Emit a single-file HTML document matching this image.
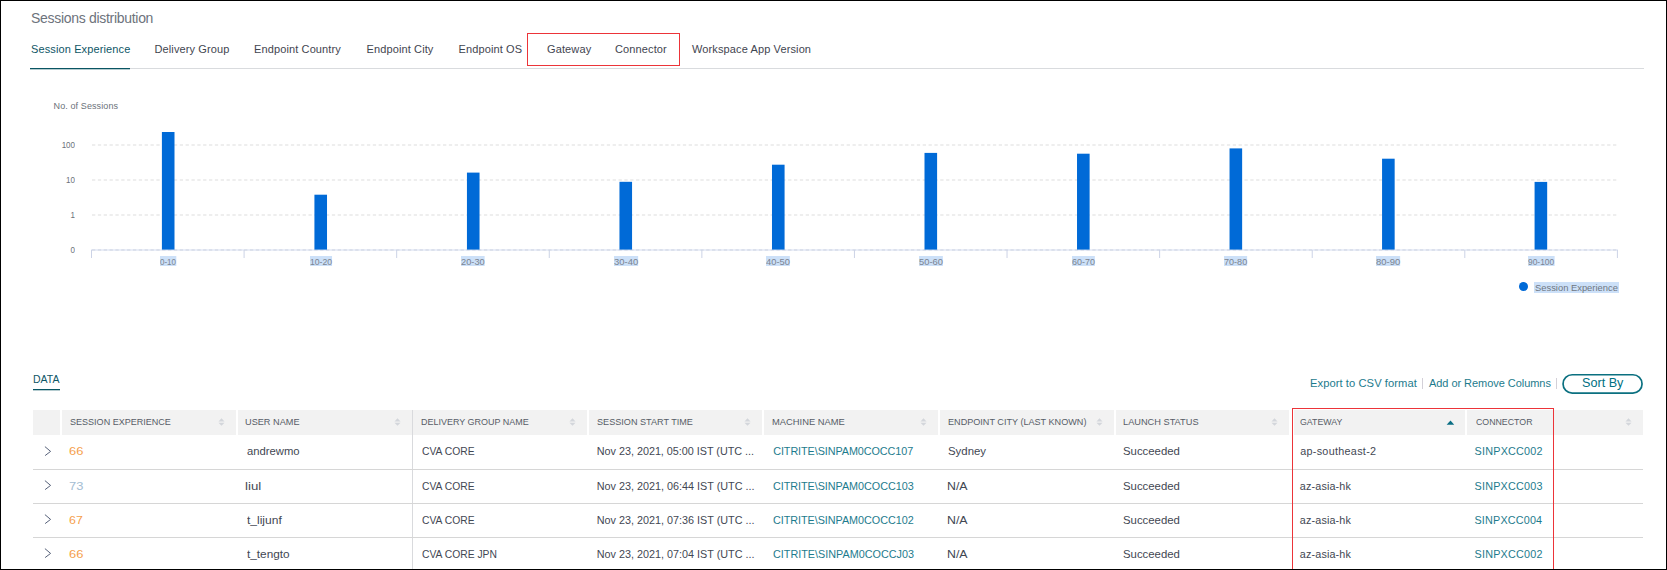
<!DOCTYPE html>
<html><head><meta charset="utf-8">
<style>
*{margin:0;padding:0;box-sizing:border-box}
html,body{width:1667px;height:570px;overflow:hidden;background:#fff}
body{position:relative;font-family:"Liberation Sans",sans-serif;color:#3b3f47}
.a{position:absolute;white-space:nowrap;line-height:1}
#frame{position:absolute;left:0;top:0;width:1667px;height:570px;border-top:1px solid #000;border-left:1px solid #000;border-right:1px solid #000;border-bottom:1px solid #000;z-index:50;pointer-events:none}
.title{left:31px;top:11px;font-size:14px;color:#6d737c;letter-spacing:-0.3px}
.tab{top:44px;font-size:11px;color:#3f4550;letter-spacing:0.12px}
.tab.act{color:#0e5666}
.tabline{left:31px;top:68px;width:1613px;height:1px;background:#d9dbde}
.tabul{left:30px;top:68px;width:100px;height:1px;background:#0a5563;box-shadow:0 1px 0 rgba(10,85,99,0.3)}
.redbox{border:1px solid #ec3439}
.ylab{font-size:9.3px;color:#6b717a;text-align:right;width:20px;transform:scaleX(0.86);transform-origin:right}
.grid{left:92px;width:1526px;height:0;border-top:1px dashed #dcdcdc}
.bar{width:13px;background:#0068d7}
.tick{width:1px;height:8px;top:250px;background:#ccd3e6}
.xl{transform:translateX(-50%) scaleX(0.8)}
.xlab{font-size:9.8px;color:#7b8491;background:#cce0f8;top:256px;height:10px;line-height:11px}
.hdr{top:410px;height:25px;background:#f2f2f2}
.htx{top:418px;font-size:9.6px;color:#646a73;letter-spacing:-0.4px}
.sort{width:7px;height:9px}
.rowsep{left:33px;width:1610px;height:1px;background:#d6d6d6}
.cell{font-size:10.7px;color:#3b3f47}
.lnk{color:#1d7b8d}
.chev{width:7px;height:10px}
</style></head><body>
<div id="frame"></div>
<div class="a title">Sessions distribution</div>

<div class="a tabline"></div>
<div class="a tabul"></div>
<div class="a tab act" style="left:31px">Session Experience</div>
<div class="a tab" style="left:154.5px">Delivery Group</div>
<div class="a tab" style="left:254px">Endpoint Country</div>
<div class="a tab" style="left:366.5px">Endpoint City</div>
<div class="a tab" style="left:458.5px">Endpoint OS</div>
<div class="a tab" style="left:547px">Gateway</div>
<div class="a tab" style="left:615px">Connector</div>
<div class="a tab" style="left:692px">Workspace App Version</div>
<div class="a redbox" style="left:527px;top:33px;width:153px;height:33px"></div>

<!-- chart -->
<div class="a" style="left:53.6px;top:102px;font-size:9px;color:#6b717a;letter-spacing:0.1px">No. of Sessions</div>
<div class="a ylab" style="left:55px;top:140.5px">100</div>
<div class="a ylab" style="left:55px;top:175.5px">10</div>
<div class="a ylab" style="left:55px;top:210.5px">1</div>
<div class="a ylab" style="left:55px;top:245.5px">0</div>
<svg class="a" style="left:0;top:0" width="1667" height="300"><line x1="92" y1="145" x2="1618" y2="145" stroke="#dddddd" stroke-width="1" stroke-dasharray="3.3 2.55"/><line x1="92" y1="180" x2="1618" y2="180" stroke="#dddddd" stroke-width="1" stroke-dasharray="3.3 2.55"/><line x1="92" y1="215" x2="1618" y2="215" stroke="#dddddd" stroke-width="1" stroke-dasharray="3.3 2.55"/><line x1="91" y1="250" x2="1618" y2="250" stroke="#d5ddf1" stroke-width="1"/><line x1="92" y1="250" x2="1618" y2="250" stroke="#cdd3e0" stroke-width="1" stroke-dasharray="3.3 2.55"/><line x1="91.50" y1="250" x2="91.50" y2="258" stroke="#ccd3e6" stroke-width="1"/><line x1="244.09" y1="250" x2="244.09" y2="258" stroke="#ccd3e6" stroke-width="1"/><line x1="396.68" y1="250" x2="396.68" y2="258" stroke="#ccd3e6" stroke-width="1"/><line x1="549.27" y1="250" x2="549.27" y2="258" stroke="#ccd3e6" stroke-width="1"/><line x1="701.86" y1="250" x2="701.86" y2="258" stroke="#ccd3e6" stroke-width="1"/><line x1="854.45" y1="250" x2="854.45" y2="258" stroke="#ccd3e6" stroke-width="1"/><line x1="1007.04" y1="250" x2="1007.04" y2="258" stroke="#ccd3e6" stroke-width="1"/><line x1="1159.63" y1="250" x2="1159.63" y2="258" stroke="#ccd3e6" stroke-width="1"/><line x1="1312.22" y1="250" x2="1312.22" y2="258" stroke="#ccd3e6" stroke-width="1"/><line x1="1464.81" y1="250" x2="1464.81" y2="258" stroke="#ccd3e6" stroke-width="1"/><line x1="1617.40" y1="250" x2="1617.40" y2="258" stroke="#ccd3e6" stroke-width="1"/><rect x="161.90" y="132" width="12.6" height="117.60" fill="#006ad7"/><rect x="314.42" y="194.7" width="12.6" height="54.90" fill="#006ad7"/><rect x="466.94" y="172.6" width="12.6" height="77.00" fill="#006ad7"/><rect x="619.46" y="181.8" width="12.6" height="67.80" fill="#006ad7"/><rect x="771.98" y="164.7" width="12.6" height="84.90" fill="#006ad7"/><rect x="924.50" y="152.9" width="12.6" height="96.70" fill="#006ad7"/><rect x="1077.02" y="153.7" width="12.6" height="95.90" fill="#006ad7"/><rect x="1229.54" y="148.4" width="12.6" height="101.20" fill="#006ad7"/><rect x="1382.06" y="158.7" width="12.6" height="90.90" fill="#006ad7"/><rect x="1534.58" y="181.9" width="12.6" height="67.70" fill="#006ad7"/></svg>
<div class="a xlab" style="left:160.20px;transform:scaleX(0.816);transform-origin:0 0">0-10</div>
<div class="a xlab" style="left:309.67px;transform:scaleX(0.882);transform-origin:0 0">10-20</div>
<div class="a xlab" style="left:461.39px;transform:scaleX(0.946);transform-origin:0 0">20-30</div>
<div class="a xlab" style="left:613.66px;transform:scaleX(0.966);transform-origin:0 0">30-40</div>
<div class="a xlab" style="left:766.33px;transform:scaleX(0.954);transform-origin:0 0">40-50</div>
<div class="a xlab" style="left:918.85px;transform:scaleX(0.954);transform-origin:0 0">50-60</div>
<div class="a xlab" style="left:1071.87px;transform:scaleX(0.914);transform-origin:0 0">60-70</div>
<div class="a xlab" style="left:1224.24px;transform:scaleX(0.926);transform-origin:0 0">70-80</div>
<div class="a xlab" style="left:1376.26px;transform:scaleX(0.966);transform-origin:0 0">80-90</div>
<div class="a xlab" style="left:1527.78px;transform:scaleX(0.859);transform-origin:0 0">90-100</div>
<div class="a" style="left:1519.3px;top:282px;width:9.2px;height:9.4px;border-radius:50%;background:#006ad7"></div>
<div class="a" style="left:1534px;top:282px;height:10.6px;line-height:12px;font-size:9.4px;color:#6f7782;background:#cce0f8;padding:0 1px">Session Experience</div>

<!-- data -->
<div class="a" style="left:33px;top:374px;font-size:10.5px;color:#0e5666">DATA</div>
<div class="a" style="left:33px;top:389px;width:27px;height:1px;background:#0a5563;box-shadow:0 1px 0 rgba(10,85,99,0.3)"></div>
<div class="a" style="left:1310px;top:378px;font-size:11.2px;color:#1d7b8d;letter-spacing:0.06px">Export to CSV format</div>
<div class="a" style="left:1422px;top:378px;width:1px;height:11px;background:#d3d0d8"></div>
<div class="a" style="left:1429px;top:378px;font-size:11px;color:#1d7b8d;letter-spacing:-0.05px">Add or Remove Columns</div>
<div class="a" style="left:1556px;top:378px;width:1px;height:11px;background:#d3d0d8"></div>
<svg class="a" style="left:1560px;top:372px" width="86" height="24"><rect x="3.05" y="2.75" width="79" height="18.3" rx="9.15" fill="none" stroke="#0b7080" stroke-width="1.7"/></svg>
<div class="a" style="left:1581.5px;top:375px;font-size:13.5px;line-height:16px;color:#007082;transform:scaleX(0.935);transform-origin:0 0">Sort By</div>

<div class="a hdr" style="left:33px;width:27px"></div>
<div class="a hdr" style="left:62px;width:174px"></div>
<svg class="a" style="left:217.8px;top:418px" width="7" height="9" viewBox="0 0 7 9"><path d="M3.5 0.3L6.5 3.4H0.5Z M3.5 7.8L6.5 4.7H0.5Z" fill="#d3d6db"/></svg>
<div class="a hdr" style="left:238px;width:174px"></div>
<svg class="a" style="left:393.8px;top:418px" width="7" height="9" viewBox="0 0 7 9"><path d="M3.5 0.3L6.5 3.4H0.5Z M3.5 7.8L6.5 4.7H0.5Z" fill="#d3d6db"/></svg>
<div class="a hdr" style="left:413px;width:174px"></div>
<svg class="a" style="left:568.8px;top:418px" width="7" height="9" viewBox="0 0 7 9"><path d="M3.5 0.3L6.5 3.4H0.5Z M3.5 7.8L6.5 4.7H0.5Z" fill="#d3d6db"/></svg>
<div class="a hdr" style="left:589px;width:173px"></div>
<svg class="a" style="left:743.8px;top:418px" width="7" height="9" viewBox="0 0 7 9"><path d="M3.5 0.3L6.5 3.4H0.5Z M3.5 7.8L6.5 4.7H0.5Z" fill="#d3d6db"/></svg>
<div class="a hdr" style="left:764px;width:174px"></div>
<svg class="a" style="left:919.8px;top:418px" width="7" height="9" viewBox="0 0 7 9"><path d="M3.5 0.3L6.5 3.4H0.5Z M3.5 7.8L6.5 4.7H0.5Z" fill="#d3d6db"/></svg>
<div class="a hdr" style="left:940px;width:174px"></div>
<svg class="a" style="left:1095.8px;top:418px" width="7" height="9" viewBox="0 0 7 9"><path d="M3.5 0.3L6.5 3.4H0.5Z M3.5 7.8L6.5 4.7H0.5Z" fill="#d3d6db"/></svg>
<div class="a hdr" style="left:1116px;width:173px"></div>
<svg class="a" style="left:1270.8px;top:418px" width="7" height="9" viewBox="0 0 7 9"><path d="M3.5 0.3L6.5 3.4H0.5Z M3.5 7.8L6.5 4.7H0.5Z" fill="#d3d6db"/></svg>
<div class="a hdr" style="left:1294px;width:171px"></div>
<div class="a hdr" style="left:1467px;width:176px"></div>
<svg class="a" style="left:1624.5px;top:418px" width="7" height="9" viewBox="0 0 7 9"><path d="M3.5 0.3L6.5 3.4H0.5Z M3.5 7.8L6.5 4.7H0.5Z" fill="#d3d6db"/></svg>
<svg class="a" style="left:1446px;top:420px" width="9" height="6" viewBox="0 0 9 6"><path d="M4.5 0.6L8.2 4.8H0.6Z" fill="#0a6e84"/></svg>
<div class="a" style="left:412px;top:410px;width:1px;height:160px;background:#d9dadd"></div>
<div class="a rowsep" style="top:469px"></div>
<div class="a rowsep" style="top:503px"></div>
<div class="a rowsep" style="top:537px"></div>
<svg class="a" style="left:44px;top:446px" width="8" height="11" viewBox="0 0 8 11"><path d="M0.9 0.6L6.6 5.4L1.1 9.6" fill="none" stroke="#4d5872" stroke-width="0.95"/></svg>
<svg class="a" style="left:44px;top:480px" width="8" height="11" viewBox="0 0 8 11"><path d="M0.9 0.6L6.6 5.4L1.1 9.6" fill="none" stroke="#4d5872" stroke-width="0.95"/></svg>
<svg class="a" style="left:44px;top:514px" width="8" height="11" viewBox="0 0 8 11"><path d="M0.9 0.6L6.6 5.4L1.1 9.6" fill="none" stroke="#4d5872" stroke-width="0.95"/></svg>
<svg class="a" style="left:44px;top:548px" width="8" height="11" viewBox="0 0 8 11"><path d="M0.9 0.6L6.6 5.4L1.1 9.6" fill="none" stroke="#4d5872" stroke-width="0.95"/></svg>
<div class="a redbox" style="left:1292px;top:408px;width:262px;height:170px;z-index:10"></div>
<div class="a" style="left:69.58px;top:416.00px;font-size:9.8px;line-height:11px;letter-spacing:0.000px;color:#575d67;transform:scaleX(0.922);transform-origin:0 0">SESSION EXPERIENCE</div>
<div class="a" style="left:245.36px;top:416.00px;font-size:9.8px;line-height:11px;letter-spacing:0.000px;color:#575d67;transform:scaleX(0.937);transform-origin:0 0">USER NAME</div>
<div class="a" style="left:420.68px;top:416.00px;font-size:9.8px;line-height:11px;letter-spacing:0.000px;color:#575d67;transform:scaleX(0.916);transform-origin:0 0">DELIVERY GROUP NAME</div>
<div class="a" style="left:596.57px;top:416.00px;font-size:9.8px;line-height:11px;letter-spacing:0.000px;color:#575d67;transform:scaleX(0.929);transform-origin:0 0">SESSION START TIME</div>
<div class="a" style="left:772.14px;top:416.00px;font-size:9.8px;line-height:11px;letter-spacing:0.000px;color:#575d67;transform:scaleX(0.956);transform-origin:0 0">MACHINE NAME</div>
<div class="a" style="left:947.77px;top:416.00px;font-size:9.8px;line-height:11px;letter-spacing:0.000px;color:#575d67;transform:scaleX(0.928);transform-origin:0 0">ENDPOINT CITY (LAST KNOWN)</div>
<div class="a" style="left:1123.46px;top:416.00px;font-size:9.8px;line-height:11px;letter-spacing:0.000px;color:#575d67;transform:scaleX(0.942);transform-origin:0 0">LAUNCH STATUS</div>
<div class="a" style="left:1299.80px;top:416.00px;font-size:9.8px;line-height:11px;letter-spacing:0.000px;color:#575d67;transform:scaleX(0.896);transform-origin:0 0">GATEWAY</div>
<div class="a" style="left:1475.50px;top:416.00px;font-size:9.8px;line-height:11px;letter-spacing:0.000px;color:#575d67;transform:scaleX(0.897);transform-origin:0 0">CONNECTOR</div>
<div class="a" style="left:69.13px;top:445.00px;font-size:11px;line-height:13px;letter-spacing:0.000px;color:#f5a04c;transform:scaleX(1.173);transform-origin:0 0">66</div>
<div class="a" style="left:246.50px;top:445.00px;font-size:10.8px;line-height:12px;letter-spacing:0.000px;color:#424753;transform:scaleX(1.044);transform-origin:0 0">andrewmo</div>
<div class="a" style="left:421.80px;top:445.00px;font-size:10.8px;line-height:12px;letter-spacing:0.000px;color:#424753;transform:scaleX(0.956);transform-origin:0 0">CVA CORE</div>
<div class="a" style="left:596.80px;top:445.00px;font-size:10.8px;line-height:12px;letter-spacing:-0.013px;color:#424753">Nov 23, 2021, 05:00 IST (UTC ...</div>
<div class="a" style="left:773.20px;top:445.00px;font-size:10.8px;line-height:12px;letter-spacing:-0.067px;color:#1d7b8d">CITRITE\SINPAM0COCC107</div>
<div class="a" style="left:947.94px;top:445.00px;font-size:10.8px;line-height:12px;letter-spacing:0.000px;color:#424753;transform:scaleX(1.057);transform-origin:0 0">Sydney</div>
<div class="a" style="left:1123.35px;top:445.00px;font-size:10.8px;line-height:12px;letter-spacing:0.000px;color:#424753;transform:scaleX(1.053);transform-origin:0 0">Succeeded</div>
<div class="a" style="left:1300.20px;top:445.00px;font-size:10.8px;line-height:12px;letter-spacing:0.296px;color:#424753">ap-southeast-2</div>
<div class="a" style="left:1474.60px;top:445.00px;font-size:10.8px;line-height:12px;letter-spacing:0.211px;color:#1d7b8d">SINPXCC002</div>
<div class="a" style="left:69.33px;top:480.00px;font-size:11px;line-height:13px;letter-spacing:0.000px;color:#a4bdd3;transform:scaleX(1.173);transform-origin:0 0">73</div>
<div class="a" style="left:245.28px;top:480.00px;font-size:10.8px;line-height:12px;letter-spacing:0.000px;color:#424753;transform:scaleX(1.225);transform-origin:0 0">liul</div>
<div class="a" style="left:421.80px;top:480.00px;font-size:10.8px;line-height:12px;letter-spacing:0.000px;color:#424753;transform:scaleX(0.956);transform-origin:0 0">CVA CORE</div>
<div class="a" style="left:596.80px;top:480.00px;font-size:10.8px;line-height:12px;letter-spacing:0.002px;color:#424753">Nov 23, 2021, 06:44 IST (UTC ...</div>
<div class="a" style="left:773.00px;top:480.00px;font-size:10.8px;line-height:12px;letter-spacing:-0.036px;color:#1d7b8d">CITRITE\SINPAM0COCC103</div>
<div class="a" style="left:947.36px;top:480.00px;font-size:10.8px;line-height:12px;letter-spacing:0.000px;color:#424753;transform:scaleX(1.141);transform-origin:0 0">N/A</div>
<div class="a" style="left:1123.35px;top:480.00px;font-size:10.8px;line-height:12px;letter-spacing:0.000px;color:#424753;transform:scaleX(1.053);transform-origin:0 0">Succeeded</div>
<div class="a" style="left:1299.80px;top:480.00px;font-size:10.8px;line-height:12px;letter-spacing:0.144px;color:#424753">az-asia-hk</div>
<div class="a" style="left:1474.50px;top:480.00px;font-size:10.8px;line-height:12px;letter-spacing:0.228px;color:#1d7b8d">SINPXCC003</div>
<div class="a" style="left:69.17px;top:514.00px;font-size:11px;line-height:13px;letter-spacing:0.000px;color:#f5a04c;transform:scaleX(1.127);transform-origin:0 0">67</div>
<div class="a" style="left:246.50px;top:514.00px;font-size:10.8px;line-height:12px;letter-spacing:0.000px;color:#424753;transform:scaleX(1.113);transform-origin:0 0">t_lijunf</div>
<div class="a" style="left:421.80px;top:514.00px;font-size:10.8px;line-height:12px;letter-spacing:0.000px;color:#424753;transform:scaleX(0.956);transform-origin:0 0">CVA CORE</div>
<div class="a" style="left:596.80px;top:514.00px;font-size:10.8px;line-height:12px;letter-spacing:0.002px;color:#424753">Nov 23, 2021, 07:36 IST (UTC ...</div>
<div class="a" style="left:773.00px;top:514.00px;font-size:10.8px;line-height:12px;letter-spacing:-0.036px;color:#1d7b8d">CITRITE\SINPAM0COCC102</div>
<div class="a" style="left:947.36px;top:514.00px;font-size:10.8px;line-height:12px;letter-spacing:0.000px;color:#424753;transform:scaleX(1.141);transform-origin:0 0">N/A</div>
<div class="a" style="left:1123.35px;top:514.00px;font-size:10.8px;line-height:12px;letter-spacing:0.000px;color:#424753;transform:scaleX(1.053);transform-origin:0 0">Succeeded</div>
<div class="a" style="left:1299.80px;top:514.00px;font-size:10.8px;line-height:12px;letter-spacing:0.144px;color:#424753">az-asia-hk</div>
<div class="a" style="left:1474.50px;top:514.00px;font-size:10.8px;line-height:12px;letter-spacing:0.172px;color:#1d7b8d">SINPXCC004</div>
<div class="a" style="left:69.13px;top:548.00px;font-size:11px;line-height:13px;letter-spacing:0.000px;color:#f5a04c;transform:scaleX(1.173);transform-origin:0 0">66</div>
<div class="a" style="left:246.50px;top:548.00px;font-size:10.8px;line-height:12px;letter-spacing:0.000px;color:#424753;transform:scaleX(1.092);transform-origin:0 0">t_tengto</div>
<div class="a" style="left:421.50px;top:548.00px;font-size:10.8px;line-height:12px;letter-spacing:0.000px;color:#424753;transform:scaleX(0.956);transform-origin:0 0">CVA CORE JPN</div>
<div class="a" style="left:596.80px;top:548.00px;font-size:10.8px;line-height:12px;letter-spacing:0.002px;color:#424753">Nov 23, 2021, 07:04 IST (UTC ...</div>
<div class="a" style="left:773.00px;top:548.00px;font-size:10.8px;line-height:12px;letter-spacing:0.012px;color:#1d7b8d">CITRITE\SINPAM0COCCJ03</div>
<div class="a" style="left:947.36px;top:548.00px;font-size:10.8px;line-height:12px;letter-spacing:0.000px;color:#424753;transform:scaleX(1.141);transform-origin:0 0">N/A</div>
<div class="a" style="left:1123.35px;top:548.00px;font-size:10.8px;line-height:12px;letter-spacing:0.000px;color:#424753;transform:scaleX(1.053);transform-origin:0 0">Succeeded</div>
<div class="a" style="left:1299.80px;top:548.00px;font-size:10.8px;line-height:12px;letter-spacing:0.144px;color:#424753">az-asia-hk</div>
<div class="a" style="left:1474.50px;top:548.00px;font-size:10.8px;line-height:12px;letter-spacing:0.228px;color:#1d7b8d">SINPXCC002</div>
</body></html>
